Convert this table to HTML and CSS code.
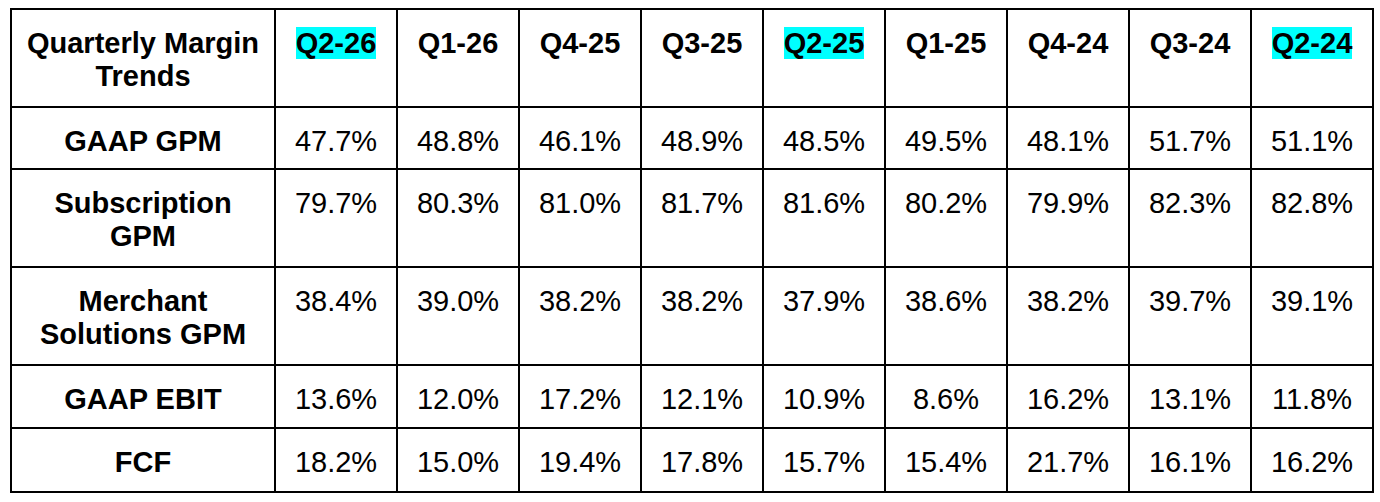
FILE: index.html
```html
<!DOCTYPE html>
<html lang="en">
<head>
<meta charset="utf-8">
<title>Quarterly Margin Trends</title>
<link rel="stylesheet" href="styles.css">
</head>
<body>
<div class="grid">
  <div class="cell head">Quarterly Margin<br>Trends</div>
  <div class="cell head"><span class="hl">Q2-26</span></div>
  <div class="cell head">Q1-26</div>
  <div class="cell head">Q4-25</div>
  <div class="cell head">Q3-25</div>
  <div class="cell head"><span class="hl">Q2-25</span></div>
  <div class="cell head">Q1-25</div>
  <div class="cell head">Q4-24</div>
  <div class="cell head">Q3-24</div>
  <div class="cell head"><span class="hl">Q2-24</span></div>

  <div class="cell head">GAAP GPM</div>
  <div class="cell">47.7%</div>
  <div class="cell">48.8%</div>
  <div class="cell">46.1%</div>
  <div class="cell">48.9%</div>
  <div class="cell">48.5%</div>
  <div class="cell">49.5%</div>
  <div class="cell">48.1%</div>
  <div class="cell">51.7%</div>
  <div class="cell">51.1%</div>

  <div class="cell head">Subscription<br>GPM</div>
  <div class="cell">79.7%</div>
  <div class="cell">80.3%</div>
  <div class="cell">81.0%</div>
  <div class="cell">81.7%</div>
  <div class="cell">81.6%</div>
  <div class="cell">80.2%</div>
  <div class="cell">79.9%</div>
  <div class="cell">82.3%</div>
  <div class="cell">82.8%</div>

  <div class="cell head">Merchant<br>Solutions GPM</div>
  <div class="cell">38.4%</div>
  <div class="cell">39.0%</div>
  <div class="cell">38.2%</div>
  <div class="cell">38.2%</div>
  <div class="cell">37.9%</div>
  <div class="cell">38.6%</div>
  <div class="cell">38.2%</div>
  <div class="cell">39.7%</div>
  <div class="cell">39.1%</div>

  <div class="cell head">GAAP EBIT</div>
  <div class="cell">13.6%</div>
  <div class="cell">12.0%</div>
  <div class="cell">17.2%</div>
  <div class="cell">12.1%</div>
  <div class="cell">10.9%</div>
  <div class="cell">8.6%</div>
  <div class="cell">16.2%</div>
  <div class="cell">13.1%</div>
  <div class="cell">11.8%</div>

  <div class="cell head">FCF</div>
  <div class="cell">18.2%</div>
  <div class="cell">15.0%</div>
  <div class="cell">19.4%</div>
  <div class="cell">17.8%</div>
  <div class="cell">15.7%</div>
  <div class="cell">15.4%</div>
  <div class="cell">21.7%</div>
  <div class="cell">16.1%</div>
  <div class="cell">16.2%</div>
</div>
</body>
</html>
```
FILE: styles.css
```css
html, body {
  margin: 0;
  padding: 0;
  background: #ffffff;
}

body {
  padding: 8px 0 0 10px;
  font-family: "Liberation Sans", Arial, sans-serif;
  color: #000000;
}

.grid {
  display: grid;
  grid-template-columns: 264px repeat(9, 122px);
  grid-template-rows: 98px 62px 98px 98px 63px 64px;
  width: max-content;
  border-left: 2px solid #000;
  border-top: 2px solid #000;
}

.cell {
  box-sizing: border-box;
  border-right: 2px solid #000;
  border-bottom: 2px solid #000;
  padding: 17px 4px 0;
  font-size: 29px;
  line-height: 33px;
  text-align: center;
  white-space: nowrap;
}

.head {
  font-weight: 700;
}

.hl {
  background: #00ffff;
}
```
